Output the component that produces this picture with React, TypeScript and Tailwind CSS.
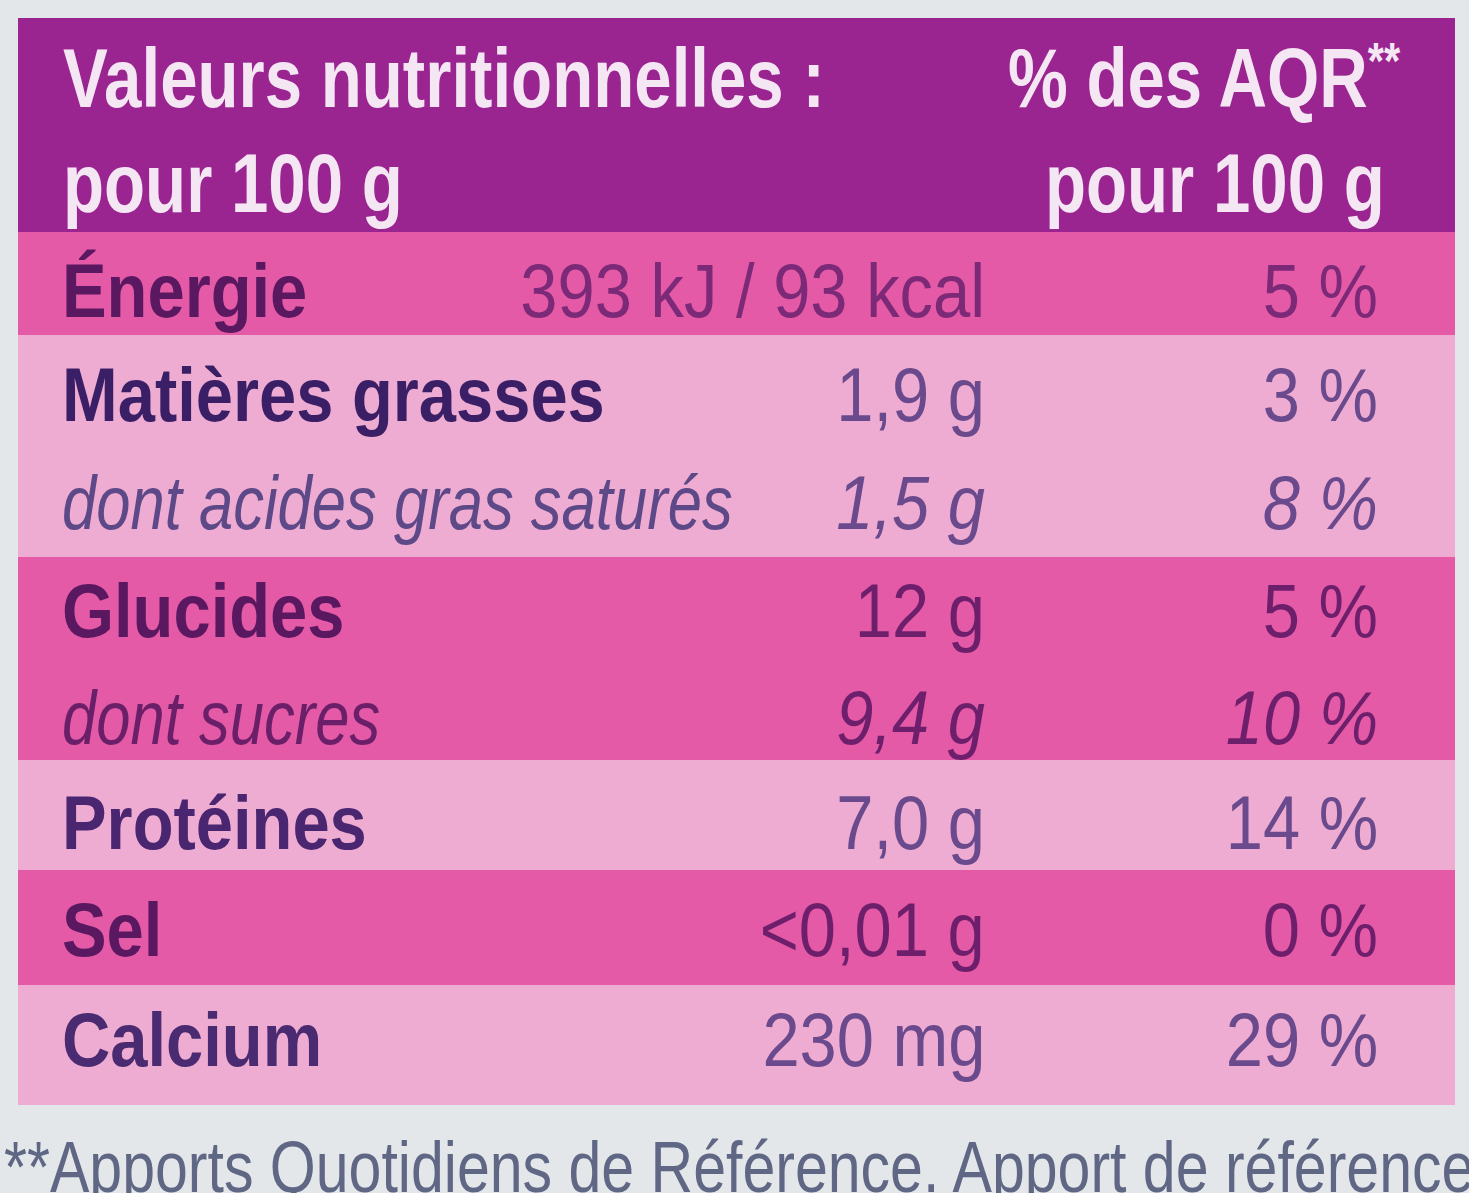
import React from "react";

const sans = "font-['Liberation_Sans','Arimo',Arial,sans-serif]";

type Row = {
  label: string;
  value: string;
  pct: string;
  bg: string;
  h: string;
  pt: string;
  sub?: boolean;
  labelColor: string;
  valueColor: string;
};

const rows: Row[] = [
  { label: "Énergie", value: "393 kJ / 93 kcal", pct: "5 %", bg: "bg-[#e45aa7]", h: "h-[103px]", pt: "pt-[21px]", labelColor: "text-[#5a1860]", valueColor: "text-[#7c2a78]" },
  { label: "Matières grasses", value: "1,9 g", pct: "3 %", bg: "bg-[#efacd2]", h: "h-[110px]", pt: "pt-[22px]", labelColor: "text-[#3b1f66]", valueColor: "text-[#6a4a8c]" },
  { label: "dont acides gras saturés", value: "1,5 g", pct: "8 %", bg: "bg-[#efacd2]", h: "h-[112px]", pt: "pt-[20px]", sub: true, labelColor: "text-[#5d4888]", valueColor: "text-[#6a4a8c]" },
  { label: "Glucides", value: "12 g", pct: "5 %", bg: "bg-[#e45aa7]", h: "h-[103px]", pt: "pt-[16px]", labelColor: "text-[#5a1860]", valueColor: "text-[#6e1f6c]" },
  { label: "dont sucres", value: "9,4 g", pct: "10 %", bg: "bg-[#e45aa7]", h: "h-[100px]", pt: "pt-[20px]", sub: true, labelColor: "text-[#6a1f68]", valueColor: "text-[#6e1f6c]" },
  { label: "Protéines", value: "7,0 g", pct: "14 %", bg: "bg-[#efacd2]", h: "h-[110px]", pt: "pt-[25px]", labelColor: "text-[#4a2570]", valueColor: "text-[#6a4a8c]" },
  { label: "Sel", value: "<0,01 g", pct: "0 %", bg: "bg-[#e45aa7]", h: "h-[115px]", pt: "pt-[22px]", labelColor: "text-[#5a1860]", valueColor: "text-[#6e1f6c]" },
  { label: "Calcium", value: "230 mg", pct: "29 %", bg: "bg-[#efacd2]", h: "h-[120px]", pt: "pt-[17px]", labelColor: "text-[#4a2a70]", valueColor: "text-[#6a4a8c]" },
];

// the label's font is a condensed one, so Liberation Sans is squeezed sideways
function Narrow({ children, right, className = "" }: { children: React.ReactNode; right?: boolean; className?: string }) {
  return (
    <span className={`inline-block flex-none whitespace-nowrap ${right ? "origin-right" : "origin-left"} ${className}`}>
      {children}
    </span>
  );
}

export default function App() {
  return (
    <div className={`w-[1469px] h-[1193px] overflow-hidden bg-[#e3e7e9] ${sans}`}>
      {/* TABLE */}
      <div className="ml-[18px] mt-[18px] w-[1437px]">
        {/* HEADER */}
        <div className="h-[214px] bg-[#9a2490] flex pl-[45px] pr-[55px] pt-[8px] text-[#f4e6f3] font-bold text-[84px] leading-[105px]">
          <div className="flex-1 min-w-0 flex flex-col items-start">
            <Narrow className="scale-x-[0.8]">Valeurs nutritionnelles :</Narrow>
            <Narrow className="scale-x-[0.8]">pour 100 g</Narrow>
          </div>
          <div className="w-[420px] flex-none flex flex-col items-end">
            <Narrow right className="scale-x-[0.8]">
              % des AQR<span className="text-[52px] align-top leading-[70px]">**</span>
            </Narrow>
            <Narrow right className="scale-x-[0.8] mr-[15px]">pour 100 g</Narrow>
          </div>
        </div>

        {/* ROWS */}
        {rows.map((r) => (
          <div key={r.label} className={`flex items-start ${r.bg} ${r.h} ${r.pt} pl-[44px] pr-[77px] text-[76px] leading-none`}>
            <div className="w-[483px] flex-none flex justify-start">
              <Narrow className={`${r.labelColor} ${r.sub ? "italic font-normal scale-x-[0.81]" : "font-bold scale-x-[0.88]"}`}>
                {r.label}
              </Narrow>
            </div>
            <div className="w-[440px] flex-none flex justify-end">
              <Narrow right className={`scale-x-[0.88] ${r.valueColor} ${r.sub ? "italic" : ""}`}>
                {r.value}
              </Narrow>
            </div>
            <div className="w-[393px] flex-none flex justify-end">
              <Narrow right className={`scale-x-[0.88] ${r.valueColor} ${r.sub ? "italic" : ""}`}>
                {r.pct}
              </Narrow>
            </div>
          </div>
        ))}
      </div>

      {/* FOOTNOTE */}
      <div className="mt-[26px] pl-[4px] text-[72px] leading-none text-[#5f6785]">
        <Narrow className="scale-x-[0.82]">**Apports Quotidiens de Référence. Apport de référence</Narrow>
      </div>
    </div>
  );
}
